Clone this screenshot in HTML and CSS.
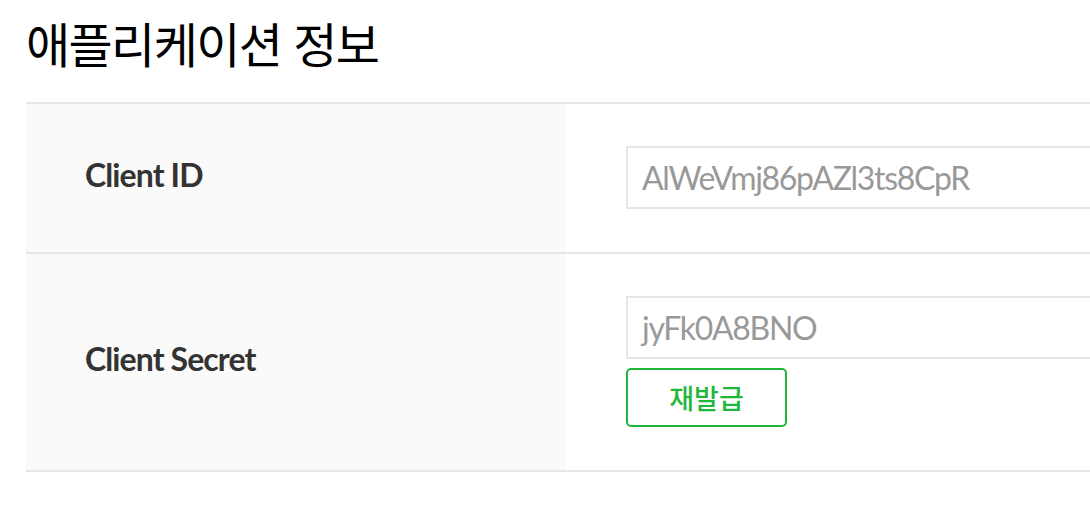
FILE: index.html
```html
<!DOCTYPE html>
<html lang="ko">
<head>
<meta charset="utf-8">
<title>애플리케이션 정보</title>
<link rel="stylesheet" href="styles.css">
</head>
<body>
<div class="page">
  <h1 class="title">애플리케이션 정보</h1>
  <div class="table">
    <div class="row">
      <div class="label">Client ID</div>
      <div class="value">
        <div class="field">AlWeVmj86pAZl3ts8CpR</div>
      </div>
    </div>
    <div class="row">
      <div class="label">Client Secret</div>
      <div class="value">
        <div class="field">jyFk0A8BNO</div>
        <button class="reissue" type="button">재발급</button>
      </div>
    </div>
  </div>
</div>
</body>
</html>
```

FILE: styles.css
```css
html, body {
  margin: 0;
  padding: 0;
  background: #ffffff;
  overflow: hidden;
}

.page {
  width: 1400px;
  padding-left: 26px;
  font-family: "Noto Sans CJK KR", "Noto Sans", sans-serif;
}

.title {
  margin: 0;
  padding-top: 12px;
  height: 102px;
  box-sizing: border-box;
  font-size: 48px;
  line-height: 60px;
  font-weight: 400;
  letter-spacing: -1.6px;
  color: #000000;
}

.table {
  border-top: 2px solid #e6e6e6;
}

.row {
  display: flex;
  border-bottom: 2px solid #e6e6e6;
}

.label {
  width: 540px;
  flex: none;
  box-sizing: border-box;
  padding: 0 0 7px 59px;
  background: #fafafa;
  display: flex;
  align-items: center;
  font-family: Lato, "Noto Sans", sans-serif;
  font-weight: 700;
  font-size: 32px;
  letter-spacing: -0.9px;
  color: #333333;
}

.value {
  flex: 1;
  padding: 42px 0 43px 60px;
  display: flex;
  flex-direction: column;
  align-items: flex-start;
  gap: 9px;
}

.field {
  width: 700px;
  height: 63px;
  box-sizing: border-box;
  border: 2px solid #e6e6e6;
  padding-left: 14px;
  display: flex;
  align-items: center;
  font-family: Lato, "Noto Sans", sans-serif;
  font-size: 32px;
  letter-spacing: -1.3px;
  color: #999999;
}

.reissue {
  width: 161px;
  height: 59px;
  box-sizing: border-box;
  border: 2px solid #1fb83a;
  border-radius: 5px;
  background: #ffffff;
  color: #1fb83a;
  font-family: "Noto Sans CJK KR", sans-serif;
  font-size: 27px;
  font-weight: 500;
  padding: 0;
  cursor: pointer;
}
```
